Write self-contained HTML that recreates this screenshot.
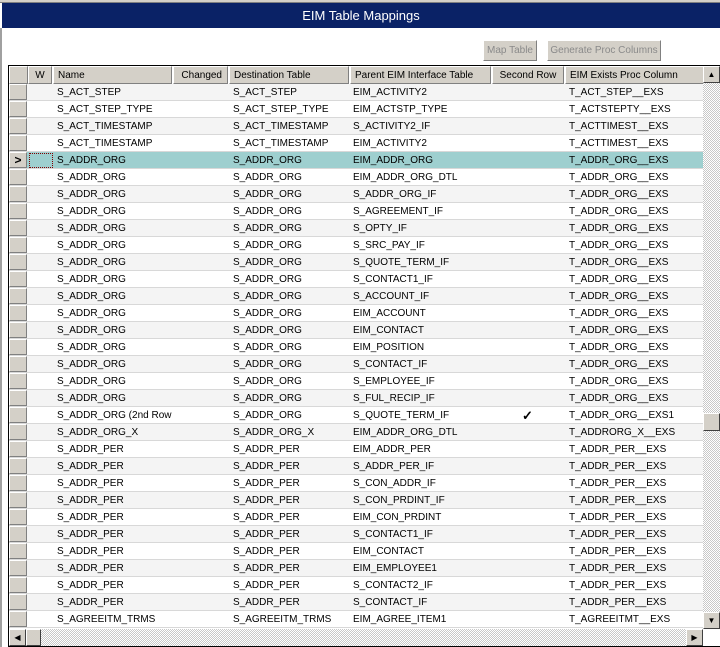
<!DOCTYPE html>
<html><head><style>
*{margin:0;padding:0;box-sizing:border-box}
body{width:720px;height:647px;background:#fff;position:relative;overflow:hidden;font-family:"Liberation Sans",sans-serif;font-size:10px;color:#000}
.abs{position:absolute}
#top{left:0;top:0;width:720px;height:3px;background:#d4d0c8;border-bottom:1px solid #808080}
#title{left:2px;top:3px;width:718px;height:25px;background:#0a2266;color:#fff;font-size:13px;text-align:center;line-height:25px}
#lb{left:0;top:28px;width:2px;height:619px;background:#a0a0a0}
.btn{top:40px;height:21px;background:#d4d0c8;border:1px solid;border-color:#fff #808080 #808080 #fff;color:#8a8a8a;text-align:center;line-height:19px;white-space:nowrap;overflow:hidden}
#grid{left:8px;top:65px;width:712px;height:582px;border:1px solid #000;border-right:none;overflow:hidden;background:#fff}
.hc{position:absolute;top:0;height:18px;background:#d4d0c8;border:1px solid;border-color:#fff #808080 #808080 #fff;line-height:17px;padding-left:4px;white-space:nowrap;overflow:hidden}
.row{position:absolute;left:0;width:694px;height:17px;border-bottom:1px solid #d8d8d8}
.row.a{background:#f4f4f4}
.row.s{background:#9ecfcf}
.row span{position:absolute;top:1px;line-height:16px;white-space:nowrap}
.rh{position:absolute;left:0;top:0;width:18px;height:16px;background:#d4d0c8;border:1px solid;border-color:#fff #808080 #808080 #fff}
.c1{left:48px}.c2{left:224px}.c3{left:344px}.c4{left:560px}
.chkr{background-image:repeating-conic-gradient(#c8c8c8 0 25%,#fff 0 50%);background-size:2px 2px}
.sb{position:absolute;width:17px;height:17px;background:#d4d0c8;border:1px solid;border-color:#fff #404040 #404040 #fff;font-size:8px;text-align:center;line-height:15px}
</style></head><body>
<div class="abs" id="top"></div>
<div class="abs" id="title">EIM Table Mappings</div>
<div class="abs" id="lb"></div>
<div class="abs btn" style="left:483px;width:54px">Map Table</div>
<div class="abs btn" style="left:547px;width:114px">Generate Proc Columns</div>
<div class="abs" id="grid">
<div class="hc" style="left:0;width:19px"></div>
<div class="hc" style="left:19px;width:24px;text-align:center;padding:0">W</div>
<div class="hc" style="left:44px;width:119px">Name</div>
<div class="hc" style="left:164px;width:55px;text-align:right;padding-right:5px">Changed</div>
<div class="hc" style="left:220px;width:120px">Destination Table</div>
<div class="hc" style="left:341px;width:141px">Parent EIM Interface Table</div>
<div class="hc" style="left:483px;width:72px;text-align:center;padding:0">Second Row</div>
<div class="hc" style="left:556px;width:139px">EIM Exists Proc Column</div>
<div style="position:absolute;left:0;top:18px">
<div class="row a" style="top:0"><div class="rh"></div><span class="c1">S_ACT_STEP</span><span class="c2">S_ACT_STEP</span><span class="c3">EIM_ACTIVITY2</span><span class="c4">T_ACT_STEP__EXS</span></div>
<div class="row" style="top:17px"><div class="rh"></div><span class="c1">S_ACT_STEP_TYPE</span><span class="c2">S_ACT_STEP_TYPE</span><span class="c3">EIM_ACTSTP_TYPE</span><span class="c4">T_ACTSTEPTY__EXS</span></div>
<div class="row a" style="top:34px"><div class="rh"></div><span class="c1">S_ACT_TIMESTAMP</span><span class="c2">S_ACT_TIMESTAMP</span><span class="c3">S_ACTIVITY2_IF</span><span class="c4">T_ACTTIMEST__EXS</span></div>
<div class="row" style="top:51px"><div class="rh"></div><span class="c1">S_ACT_TIMESTAMP</span><span class="c2">S_ACT_TIMESTAMP</span><span class="c3">EIM_ACTIVITY2</span><span class="c4">T_ACTTIMEST__EXS</span></div>
<div class="row s" style="top:68px"><div class="rh" style="font-weight:bold;font-size:12px;line-height:14px;text-align:center">&gt;</div><div style="position:absolute;left:20px;top:1px;width:24px;height:15px;border:1px dotted #800000"></div><span class="c1">S_ADDR_ORG</span><span class="c2">S_ADDR_ORG</span><span class="c3">EIM_ADDR_ORG</span><span class="c4">T_ADDR_ORG__EXS</span></div>
<div class="row" style="top:85px"><div class="rh"></div><span class="c1">S_ADDR_ORG</span><span class="c2">S_ADDR_ORG</span><span class="c3">EIM_ADDR_ORG_DTL</span><span class="c4">T_ADDR_ORG__EXS</span></div>
<div class="row a" style="top:102px"><div class="rh"></div><span class="c1">S_ADDR_ORG</span><span class="c2">S_ADDR_ORG</span><span class="c3">S_ADDR_ORG_IF</span><span class="c4">T_ADDR_ORG__EXS</span></div>
<div class="row" style="top:119px"><div class="rh"></div><span class="c1">S_ADDR_ORG</span><span class="c2">S_ADDR_ORG</span><span class="c3">S_AGREEMENT_IF</span><span class="c4">T_ADDR_ORG__EXS</span></div>
<div class="row a" style="top:136px"><div class="rh"></div><span class="c1">S_ADDR_ORG</span><span class="c2">S_ADDR_ORG</span><span class="c3">S_OPTY_IF</span><span class="c4">T_ADDR_ORG__EXS</span></div>
<div class="row" style="top:153px"><div class="rh"></div><span class="c1">S_ADDR_ORG</span><span class="c2">S_ADDR_ORG</span><span class="c3">S_SRC_PAY_IF</span><span class="c4">T_ADDR_ORG__EXS</span></div>
<div class="row a" style="top:170px"><div class="rh"></div><span class="c1">S_ADDR_ORG</span><span class="c2">S_ADDR_ORG</span><span class="c3">S_QUOTE_TERM_IF</span><span class="c4">T_ADDR_ORG__EXS</span></div>
<div class="row" style="top:187px"><div class="rh"></div><span class="c1">S_ADDR_ORG</span><span class="c2">S_ADDR_ORG</span><span class="c3">S_CONTACT1_IF</span><span class="c4">T_ADDR_ORG__EXS</span></div>
<div class="row a" style="top:204px"><div class="rh"></div><span class="c1">S_ADDR_ORG</span><span class="c2">S_ADDR_ORG</span><span class="c3">S_ACCOUNT_IF</span><span class="c4">T_ADDR_ORG__EXS</span></div>
<div class="row" style="top:221px"><div class="rh"></div><span class="c1">S_ADDR_ORG</span><span class="c2">S_ADDR_ORG</span><span class="c3">EIM_ACCOUNT</span><span class="c4">T_ADDR_ORG__EXS</span></div>
<div class="row a" style="top:238px"><div class="rh"></div><span class="c1">S_ADDR_ORG</span><span class="c2">S_ADDR_ORG</span><span class="c3">EIM_CONTACT</span><span class="c4">T_ADDR_ORG__EXS</span></div>
<div class="row" style="top:255px"><div class="rh"></div><span class="c1">S_ADDR_ORG</span><span class="c2">S_ADDR_ORG</span><span class="c3">EIM_POSITION</span><span class="c4">T_ADDR_ORG__EXS</span></div>
<div class="row a" style="top:272px"><div class="rh"></div><span class="c1">S_ADDR_ORG</span><span class="c2">S_ADDR_ORG</span><span class="c3">S_CONTACT_IF</span><span class="c4">T_ADDR_ORG__EXS</span></div>
<div class="row" style="top:289px"><div class="rh"></div><span class="c1">S_ADDR_ORG</span><span class="c2">S_ADDR_ORG</span><span class="c3">S_EMPLOYEE_IF</span><span class="c4">T_ADDR_ORG__EXS</span></div>
<div class="row a" style="top:306px"><div class="rh"></div><span class="c1">S_ADDR_ORG</span><span class="c2">S_ADDR_ORG</span><span class="c3">S_FUL_RECIP_IF</span><span class="c4">T_ADDR_ORG__EXS</span></div>
<div class="row" style="top:323px"><div class="rh"></div><span class="c1">S_ADDR_ORG (2nd Row</span><span class="c2">S_ADDR_ORG</span><span class="c3">S_QUOTE_TERM_IF</span><span style="left:513px;font-size:13px;font-weight:bold">&#10003;</span><span class="c4">T_ADDR_ORG__EXS1</span></div>
<div class="row a" style="top:340px"><div class="rh"></div><span class="c1">S_ADDR_ORG_X</span><span class="c2">S_ADDR_ORG_X</span><span class="c3">EIM_ADDR_ORG_DTL</span><span class="c4">T_ADDRORG_X__EXS</span></div>
<div class="row" style="top:357px"><div class="rh"></div><span class="c1">S_ADDR_PER</span><span class="c2">S_ADDR_PER</span><span class="c3">EIM_ADDR_PER</span><span class="c4">T_ADDR_PER__EXS</span></div>
<div class="row a" style="top:374px"><div class="rh"></div><span class="c1">S_ADDR_PER</span><span class="c2">S_ADDR_PER</span><span class="c3">S_ADDR_PER_IF</span><span class="c4">T_ADDR_PER__EXS</span></div>
<div class="row" style="top:391px"><div class="rh"></div><span class="c1">S_ADDR_PER</span><span class="c2">S_ADDR_PER</span><span class="c3">S_CON_ADDR_IF</span><span class="c4">T_ADDR_PER__EXS</span></div>
<div class="row a" style="top:408px"><div class="rh"></div><span class="c1">S_ADDR_PER</span><span class="c2">S_ADDR_PER</span><span class="c3">S_CON_PRDINT_IF</span><span class="c4">T_ADDR_PER__EXS</span></div>
<div class="row" style="top:425px"><div class="rh"></div><span class="c1">S_ADDR_PER</span><span class="c2">S_ADDR_PER</span><span class="c3">EIM_CON_PRDINT</span><span class="c4">T_ADDR_PER__EXS</span></div>
<div class="row a" style="top:442px"><div class="rh"></div><span class="c1">S_ADDR_PER</span><span class="c2">S_ADDR_PER</span><span class="c3">S_CONTACT1_IF</span><span class="c4">T_ADDR_PER__EXS</span></div>
<div class="row" style="top:459px"><div class="rh"></div><span class="c1">S_ADDR_PER</span><span class="c2">S_ADDR_PER</span><span class="c3">EIM_CONTACT</span><span class="c4">T_ADDR_PER__EXS</span></div>
<div class="row a" style="top:476px"><div class="rh"></div><span class="c1">S_ADDR_PER</span><span class="c2">S_ADDR_PER</span><span class="c3">EIM_EMPLOYEE1</span><span class="c4">T_ADDR_PER__EXS</span></div>
<div class="row" style="top:493px"><div class="rh"></div><span class="c1">S_ADDR_PER</span><span class="c2">S_ADDR_PER</span><span class="c3">S_CONTACT2_IF</span><span class="c4">T_ADDR_PER__EXS</span></div>
<div class="row a" style="top:510px"><div class="rh"></div><span class="c1">S_ADDR_PER</span><span class="c2">S_ADDR_PER</span><span class="c3">S_CONTACT_IF</span><span class="c4">T_ADDR_PER__EXS</span></div>
<div class="row" style="top:527px"><div class="rh"></div><span class="c1">S_AGREEITM_TRMS</span><span class="c2">S_AGREEITM_TRMS</span><span class="c3">EIM_AGREE_ITEM1</span><span class="c4">T_AGREEITMT__EXS</span></div>
</div>
<div class="chkr" style="position:absolute;left:694px;top:0;width:18px;height:563px"></div>
<div class="sb" style="left:694px;top:0">&#9650;</div>
<div class="sb" style="left:694px;top:347px;height:18px"></div>
<div class="sb" style="left:694px;top:546px">&#9660;</div>
<div class="chkr" style="position:absolute;left:0;top:563px;width:694px;height:18px"></div>
<div class="sb" style="left:0;top:563px">&#9664;</div>
<div class="sb" style="left:17px;top:563px;width:15px"></div>
<div class="sb" style="left:677px;top:563px">&#9654;</div>
</div>
</body></html>
